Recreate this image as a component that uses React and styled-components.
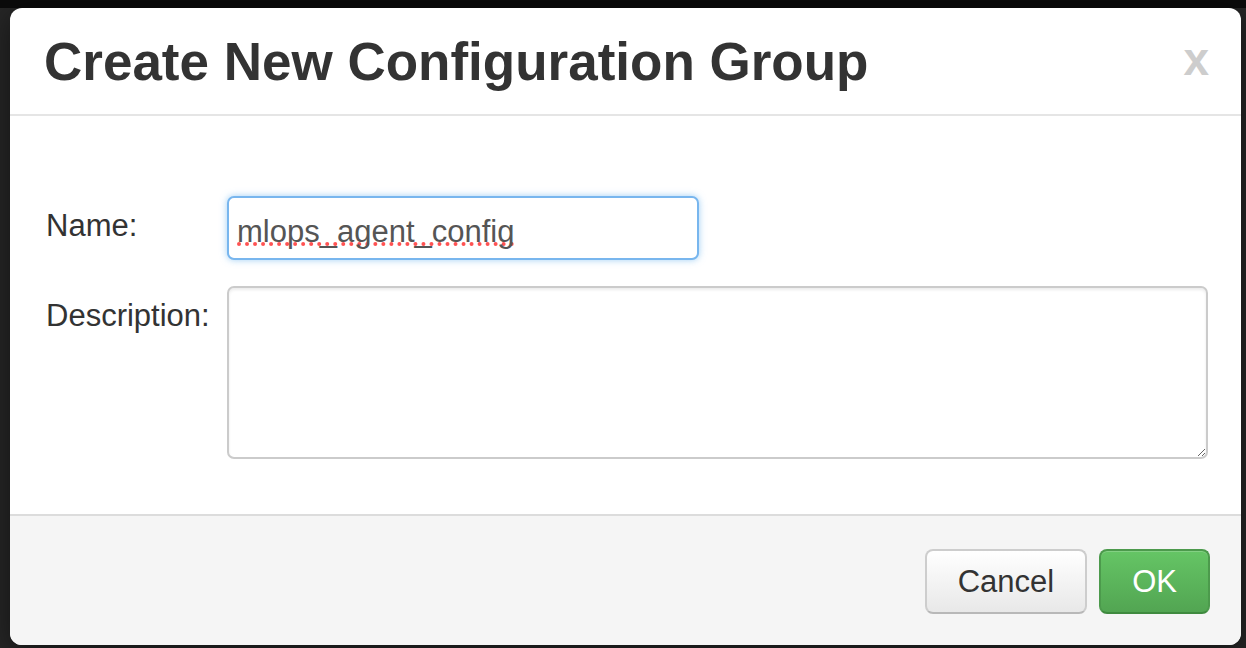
import styled, { createGlobalStyle } from "styled-components";

const GlobalStyle = createGlobalStyle`
  html, body {
    margin: 0;
    height: 100%;
  }
  body {
    background: #262626;
    font-family: "Liberation Sans", Arial, sans-serif;
    overflow: hidden;
  }
`;

const Backdrop = styled.div`
  height: 648px;
  box-sizing: border-box;
  padding: 8px 5px 3px 10px;
  background: linear-gradient(#0b0b0b 0, #0b0b0b 8px, #262626 8px);
`;

const Modal = styled.div`
  height: 637px;
  display: flex;
  flex-direction: column;
  background: #fff;
  border-radius: 12px;
  overflow: hidden;
  box-shadow: 0 6px 30px rgba(0, 0, 0, 0.5);
`;

const Header = styled.div`
  height: 106px;
  flex: none;
  display: flex;
  align-items: center;
  justify-content: space-between;
  padding: 0 32px 0 33px;
  border-bottom: 2px solid #e5e5e5;
`;

const Title = styled.h3`
  margin: 0 0 0 1px;
  font-size: 53px;
  line-height: 1;
  font-weight: 700;
  color: #333;
`;

const Close = styled.button`
  border: 0;
  background: none;
  padding: 0;
  margin-top: -4px;
  font-family: inherit;
  font-size: 46px;
  font-weight: 700;
  line-height: 1;
  color: #cdcdcd;
  cursor: pointer;
`;

const Body = styled.div`
  flex: 1;
  padding: 80px 33px 0 36px;
  display: grid;
  grid-template-columns: 181px 1fr;
  row-gap: 26px;
  align-content: start;
`;

const Label = styled.label`
  font-size: 31px;
  line-height: 1.4;
  padding-top: 8px;
  color: #333;
`;

const NameInput = styled.input`
  width: 472px;
  height: 64px;
  box-sizing: border-box;
  padding: 8px 8px 0 8px;
  border: 2px solid #78b6ee;
  border-radius: 7px;
  box-shadow: 0 0 7px rgba(82, 168, 236, 0.55);
  font-family: inherit;
  font-size: 31px;
  color: #555;
  outline: none;
  text-decoration: underline dotted #ff5252;
  text-decoration-thickness: 4px;
  text-decoration-skip-ink: none;
  text-underline-offset: 0px;
`;

const DescArea = styled.textarea`
  width: 100%;
  height: 173px;
  box-sizing: border-box;
  border: 2px solid #cbcbcb;
  border-radius: 7px;
  box-shadow: inset 0 2px 3px rgba(0, 0, 0, 0.08);
  font-family: inherit;
  font-size: 31px;
  color: #555;
  padding: 8px;
  outline: none;
  display: block;
`;

const Footer = styled.div`
  height: 131px;
  flex: none;
  box-sizing: border-box;
  padding: 33px 31px 31px;
  display: flex;
  justify-content: flex-end;
  gap: 12px;
  background: #f5f5f5;
  border-top: 2px solid #dcdcdc;
`;

const Button = styled.button`
  height: 65px;
  padding: 0 31px;
  font-family: inherit;
  font-size: 31px;
  border-radius: 8px;
  cursor: pointer;
  color: ${(p) => (p.$primary ? "#fff" : "#333")};
  border: 2px solid ${(p) => (p.$primary ? "#4c9a4c" : "#cdcdcd")};
  border-bottom-color: ${(p) => (p.$primary ? "#3f8a3f" : "#b8b8b8")};
  background: ${(p) =>
    p.$primary
      ? "linear-gradient(#65c565, #52a552)"
      : "linear-gradient(#ffffff, #e8e8e8)"};
  box-shadow: inset 0 1px 0 rgba(255, 255, 255, 0.2);
`;

export default function App() {
  return (
    <>
      <GlobalStyle />
      <Backdrop>
        <Modal>
          <Header>
            <Title>Create New Configuration Group</Title>
            <Close>x</Close>
          </Header>
          <Body>
            <Label htmlFor="cg-name">Name:</Label>
            <NameInput id="cg-name" defaultValue="mlops_agent_config" spellCheck={false} />
            <Label htmlFor="cg-desc">Description:</Label>
            <DescArea id="cg-desc" />
          </Body>
          <Footer>
            <Button>Cancel</Button>
            <Button $primary>OK</Button>
          </Footer>
        </Modal>
      </Backdrop>
    </>
  );
}
